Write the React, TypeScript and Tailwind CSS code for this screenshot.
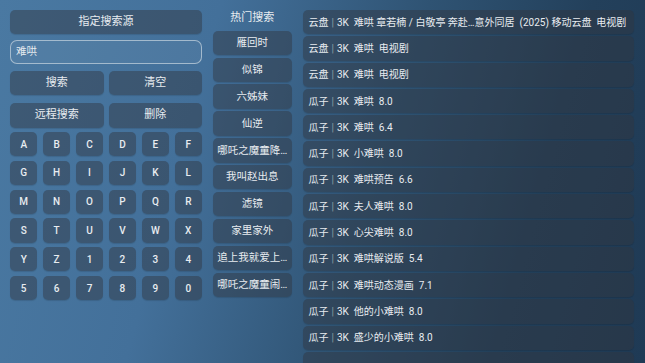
import React from "react";

const keys = "ABCDEFGHIJKLMNOPQRSTUVWXYZ1234567890".split("");
const hot = ["雁回时", "似锦", "六姊妹", "仙逆", "哪吒之魔童降…", "我叫赵出息", "滤镜", "家里家外", "追上我就爱上…", "哪吒之魔童闹…"];
const results: [string, string][] = [
  ["云盘", "难哄 章若楠 / 白敬亭 奔赴…意外同居  (2025) 移动云盘  电视剧"],
  ["云盘", "难哄  电视剧"],
  ["云盘", "难哄  电视剧"],
  ["瓜子", "难哄  8.0"],
  ["瓜子", "难哄  6.4"],
  ["瓜子", "小难哄  8.0"],
  ["瓜子", "难哄预告  6.6"],
  ["瓜子", "夫人难哄  8.0"],
  ["瓜子", "心尖难哄  8.0"],
  ["瓜子", "难哄解说版  5.4"],
  ["瓜子", "难哄动态漫画  7.1"],
  ["瓜子", "他的小难哄  8.0"],
  ["瓜子", "盛少的小难哄  8.0"],
];

const panel = "bg-[#30363d]/45 rounded-[5px] shadow-[0_1px_1px_rgba(0,0,0,0.12)]";

export default function App() {
  return (
    <div
      className="w-[645px] h-[363px] overflow-hidden flex gap-[10.5px] pl-[10px] pr-[11px] pt-[10px] text-[#e8ecf0] bg-[linear-gradient(105deg,#4a79a2_0%,#43709a_30%,#2f5373_58%,#23405b_80%,#1f3a55_100%)]"
      style={{ fontFamily: 'Roboto, "Noto Sans CJK SC", sans-serif' }}
    >
      {/* left */}
      <div className="w-[192px] shrink-0 flex flex-col">
        <div className={`${panel} h-[24.3px] flex items-center justify-center text-[11px]`}>指定搜索源</div>
        <div className="mt-[5.7px] h-[24.3px] rounded-[7px] border border-[#b9cad8]/80 bg-white/5 flex items-center pl-[5px] text-[10.5px]">难哄</div>
        <div className="mt-[6.4px] flex gap-[5px]">
          <div className={`${panel} flex-1 h-[24.3px] flex items-center justify-center text-[11px]`}>搜索</div>
          <div className={`${panel} flex-1 h-[24.3px] flex items-center justify-center text-[11px]`}>清空</div>
        </div>
        <div className="mt-[7.7px] flex gap-[5px]">
          <div className={`${panel} flex-1 h-[25px] flex items-center justify-center text-[11px]`}>远程搜索</div>
          <div className={`${panel} flex-1 h-[25px] flex items-center justify-center text-[11px]`}>删除</div>
        </div>
        <div className="mt-[4.3px] grid grid-cols-6 gap-x-[5.5px] gap-y-[4.5px]">
          {keys.map((k) => (
            <div key={k} className={`${panel} h-[24.3px] flex items-center justify-center text-[10px] font-medium`}>
              {k}
            </div>
          ))}
        </div>
      </div>

      {/* middle */}
      <div className="w-[79.5px] shrink-0 flex flex-col">
        <div className="h-[17px] flex items-center justify-center text-[11px] mb-[3.7px]">热门搜索</div>
        <div className="flex flex-col gap-[2.6px]">
          {hot.map((h) => (
            <div key={h} className={`${panel} h-[24.3px] flex items-center justify-center text-[10.5px] whitespace-nowrap overflow-hidden`}>
              {h}
            </div>
          ))}
        </div>
      </div>

      {/* right */}
      <div className="flex-1 min-w-0 flex flex-col gap-[2px]">
        {results.map(([src, t], i) => (
          <div key={i} className={`${panel} h-[24.3px] shrink-0 flex items-center pl-[6px] text-[10px] whitespace-pre overflow-hidden`}>
            <span>{src}</span>
            <span className="text-white/45 mx-[3px]">|</span>
            <span>3K  {t}</span>
          </div>
        ))}
        <div className={`${panel} h-[24.3px] shrink-0`} />
      </div>
    </div>
  );
}
